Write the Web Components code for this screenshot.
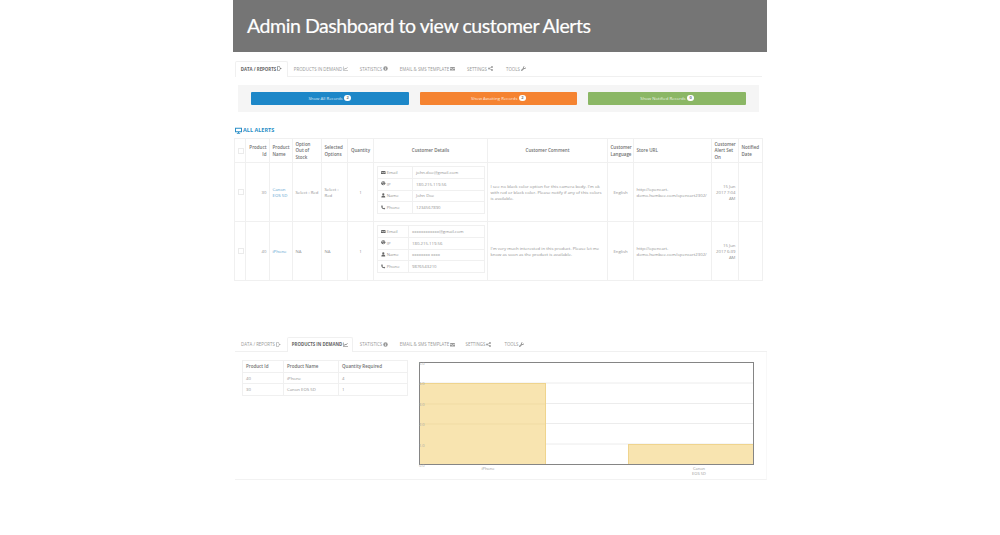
<!DOCTYPE html>
<html>
<head>
<meta charset="utf-8">
<title>Admin Dashboard</title>
<style>
  html, body { margin: 0; background: #fff; }
  body { font-family: "Open Sans", "Liberation Sans", sans-serif; color: #777; }
</style>
</head>
<body>
<dash-page>
  <title-banner>Admin Dashboard to view customer Alerts</title-banner>

  <tab-bar>
    <tab-item active icon="report" style="width:53px">Data / Reports</tab-item>
    <tab-item icon="chart" style="width:66px">Products in Demand</tab-item>
    <tab-item icon="stats" style="width:40px">Statistics</tab-item>
    <tab-item icon="mail" style="width:67px">Email &amp; SMS Template</tab-item>
    <tab-item icon="share" style="width:38px">Settings</tab-item>
    <tab-item icon="wrench" style="width:34px">Tools</tab-item>
  </tab-bar>

  <record-filters>
    <record-button color="#1d87c8" count="2">Show All Records</record-button>
    <record-button color="#f58331" count="2">Show Awaiting Records</record-button>
    <record-button color="#8bb765" count="0">Show Notified Records</record-button>
  </record-filters>

  <alerts-table></alerts-table>

  <demand-panel>
    <tab-bar slot="tabs" class="second">
      <tab-item icon="report" style="width:52px">Data / Reports</tab-item>
      <tab-item active icon="chart" style="width:66px">Products in Demand</tab-item>
      <tab-item icon="stats" style="width:42px">Statistics</tab-item>
      <tab-item icon="mail" style="width:65px">Email &amp; SMS Template</tab-item>
      <tab-item icon="share" style="width:37px">Settings</tab-item>
      <tab-item icon="wrench" style="width:35px">Tools</tab-item>
    </tab-bar>
    <demand-table slot="table"></demand-table>
    <demand-chart slot="chart"></demand-chart>
  </demand-panel>
</dash-page>

<script>
const ICONS = {
  report: '<path d="M0 1h6v1.2H1.2v5.6H6V9H0z"/><path d="M5 2.6l4.6 2.4L5 7.4V6.2L7.4 5 5 3.8z"/>',
  chart: '<path d="M0 1h1v7h9v1H0z"/><path d="M2 7l2-3 2 1 3-3 .6.6L6 6.5 4.3 5.6 2.8 7.6z"/>',
  stats: '<circle cx="5" cy="5" r="4.5"/><path fill="#fff" d="M4.4 2h1.2v1.2H4.4zM4.4 4h1.2v4H4.4z"/>',
  mail: '<path d="M0 2h10v1.2L5 6 0 3.2z"/><path d="M0 4.4l5 2.8 5-2.8V9H0z"/>',
  share: '<circle cx="2" cy="5" r="1.8"/><circle cx="8" cy="2" r="1.8"/><circle cx="8" cy="8" r="1.8"/><path d="M2 4.6l6-3 .4.8-6 3zM2 5.4l6 3 .4-.8-6-3z"/>',
  wrench: '<path d="M9.6 2.4L7.6 4.2 6 3.8 5.7 2.3 7.6.5C6.2 0 4.8.5 4.2 1.6c-.4.8-.4 1.6-.1 2.3L.5 7.5c-.6.6-.6 1.4 0 2s1.4.6 2 0l3.6-3.6c.8.3 1.6.3 2.3-.1 1.1-.6 1.6-2 1.2-3.4z"/>',
  globe: '<circle cx="5" cy="5" r="4.5"/><path fill="#fff" d="M2 3h2.4v1.4L3 5.6zM6 1.6l1.8.8-.8 1.6H5.4zM5 6h2.4L7 8 5.6 8.6z"/>',
  user: '<circle cx="5" cy="2.8" r="2.4"/><path d="M0.8 9.6c0-2.6 1.4-4.2 4.2-4.2s4.2 1.6 4.2 4.2z"/>',
  phone: '<path d="M2.6 .8L4 3.2 3 4.4c.6 1.2 1.4 2 2.6 2.6l1.2-1 2.4 1.4c-.2 1.2-1 2-2 2C3.4 9.4.6 6.6.6 2.8c0-1 .8-1.8 2-2z"/>',
  desktop: '<path d="M0 1h10v6.6H5.8V8.6H7.4V9.6H2.6V8.6H4.2V7.6H0zM1.4 2.4v3.8h7.2V2.4z"/>'
}

/**
 * Small svg glyph, looked up by name in ICONS.
 */
class UiIcon extends HTMLElement {
  connectedCallback() {
    const size = this.getAttribute('size') || 5
    this.attachShadow({mode: 'open'}).innerHTML = `
      <style>
        :host { display: inline-block; line-height: 0; vertical-align: -0.5px; }
        svg { fill: currentColor; }
      </style>
      <svg width="${size}" height="${size}" viewBox="0 0 10 10">${ICONS[this.getAttribute('name')] || ''}</svg>`
  }
}
customElements.define('ui-icon', UiIcon)

class DashPage extends HTMLElement {
  constructor() {
    super()
    this.attachShadow({mode: 'open'}).innerHTML = `
      <style>
        :host { display: block; width: 534px; margin-left: 233px; height: 535px; overflow: hidden; }
      </style>
      <slot></slot>`
  }
}
customElements.define('dash-page', DashPage)

class TitleBanner extends HTMLElement {
  constructor() {
    super()
    this.attachShadow({mode: 'open'}).innerHTML = `
      <style>
        :host {
          display: flex; align-items: center; height: 52px; padding: 0 0 2px 14px; box-sizing: border-box;
          background: #757575; color: #fff; -webkit-text-stroke: 0.2px #fff;
          font: 400 19.5px Lato, "Open Sans", sans-serif; letter-spacing: -0.43px;
        }
      </style>
      <slot></slot>`
  }
}
customElements.define('title-banner', TitleBanner)

class TabBar extends HTMLElement {
  constructor() {
    super()
    this.attachShadow({mode: 'open'}).innerHTML = `
      <style>
        :host {
          display: flex; height: 15px; margin: 9px 5px 0 2px; padding: 0;
          border-bottom: 1px solid #f0f0f0; box-sizing: content-box;
        }
        :host(.second) { margin: 56px 0 0 2px; height: 14px; }
      </style>
      <slot></slot>`
  }
}
customElements.define('tab-bar', TabBar)

class TabItem extends HTMLElement {
  connectedCallback() {
    const icon = this.getAttribute('icon')
    this.attachShadow({mode: 'open'}).innerHTML = `
      <style>
        :host {
          display: flex; align-items: center; justify-content: center; gap: 1px; box-sizing: border-box;
          height: calc(100% + 1px); white-space: nowrap; padding-bottom: 1.5px;
          font: 400 4.4px "Open Sans", sans-serif; text-transform: uppercase; color: #999;
          border: 1px solid transparent; border-bottom: 0;
        }
        :host([active]) {
          font-weight: 700; color: #666; background: #fff;
          border-color: #f0f0f0; border-radius: 2px 2px 0 0;
        }
      </style>
      <slot></slot><ui-icon name="${icon}" size="5"></ui-icon>`
  }
}
customElements.define('tab-item', TabItem)

class RecordFilters extends HTMLElement {
  constructor() {
    super()
    this.attachShadow({mode: 'open'}).innerHTML = `
      <style>
        :host {
          display: flex; gap: 11px; height: 27px; box-sizing: border-box;
          margin: 8px 8px 0 5px; padding: 7px 13px; background: #f5f5f5;
        }
      </style>
      <slot></slot>`
  }
}
customElements.define('record-filters', RecordFilters)

class RecordButton extends HTMLElement {
  connectedCallback() {
    this.attachShadow({mode: 'open'}).innerHTML = `
      <style>
        :host {
          flex: 1; display: flex; align-items: center; justify-content: center; gap: 1.5px; padding-bottom: 1px;
          border-radius: 1px; color: rgba(255,255,255,.85); font: 400 4.3px "Open Sans", sans-serif;
          background: ${this.getAttribute('color')};
        }
        b {
          display: inline-block; width: 7px; height: 6px; line-height: 6px; border-radius: 3px; text-align: center;
          background: #fff; color: #777; font-size: 4px;
        }
      </style>
      <slot></slot><b>${this.getAttribute('count')}</b>`
  }
}
customElements.define('record-button', RecordButton)

class CustomerCard extends HTMLElement {
  connectedCallback() {
    const row = (icon, label, attr) => `
      <tr><th><ui-icon name="${icon}" size="4.6"></ui-icon> ${label}</th><td>${this.getAttribute(attr)}</td></tr>`
    this.attachShadow({mode: 'open'}).innerHTML = `
      <style>
        :host { display: block; }
        table { border-collapse: collapse; width: 100%; table-layout: fixed; }
        th, td {
          border: 1px solid #f0f0f0; height: 11.75px; padding: 0 0 1px 3px; box-sizing: border-box;
          font-weight: 400; font-size: 4.3px; text-align: left; color: #929292; white-space: nowrap;
        }
        th { width: ${this.getAttribute('label-width')}px; }
        ui-icon { color: #666; }
      </style>
      <table>
        ${row('mail', 'Email', 'email')}
        ${row('globe', 'IP', 'ip')}
        ${row('user', 'Name', 'name')}
        ${row('phone', 'Phone', 'phone')}
      </table>`
  }
}
customElements.define('customer-card', CustomerCard)

const ALERT_ROWS = [
  {
    id: 30, product: 'Canon EOS 5D', option: 'Select : Red', selected: 'Select : Red', qty: 1, labelWidth: 35,
    email: 'john.doe@gmail.com', ip: '180.215.119.56', name: 'John Doe', phone: '1234567890',
    comment: "I see no black color option for this camera body. I'm ok with red or black color. Please notify if any of this colors is available.",
    date: '15 Jun 2017 7:04 AM'
  },
  {
    id: 40, product: 'iPhone', option: 'NA', selected: 'NA', qty: 1, labelWidth: 31,
    email: 'xxxxxxxxxxxx@gmail.com', ip: '180.215.119.56', name: 'xxxxxxxx xxxx', phone: '9876543210',
    comment: "I'm very much interested in this product. Please let me know as soon as the product is available.",
    date: '15 Jun 2017 6:39 AM'
  }
]

class AlertsTable extends HTMLElement {
  constructor() {
    super()
    const rows = ALERT_ROWS.map(r => `
      <tr class="row">
        <td class="c"><i class="check"></i></td>
        <td class="r">${r.id}</td>
        <td class="link">${r.product}</td>
        <td>${r.option}</td>
        <td>${r.selected}</td>
        <td class="c">${r.qty}</td>
        <td class="card"><customer-card label-width="${r.labelWidth}" email="${r.email}" ip="${r.ip}" name="${r.name}" phone="${r.phone}"></customer-card></td>
        <td>${r.comment}</td>
        <td class="c">English</td>
        <td>http://opencart-demo.humbee.com/opencart2302/</td>
        <td class="r">${r.date}</td>
        <td></td>
      </tr>`).join('')
    this.attachShadow({mode: 'open'}).innerHTML = `
      <style>
        :host { display: block; margin: 15px 5px 0 1px; font: 400 4.3px/6.1px "Open Sans", sans-serif; color: #929292; }
        h2 {
          margin: 0 0 4px 1px; height: 7px; font: 700 5.5px/7px "Open Sans", sans-serif; color: #2a8fc7;
          text-transform: uppercase; display: flex; align-items: center; gap: 1px;
        }
        table { border-collapse: collapse; table-layout: fixed; width: 528px; }
        th, td { border: 1px solid #f0f0f0; padding: 0 2.5px; box-sizing: border-box; }
        th { height: 24px; font-weight: 600; font-size: 4.5px; color: #707070; text-align: left; }
        tr.row td { height: 59px; }
        tr.row td.card { padding: 3px 2px 0 3px; vertical-align: top; }
        .c { text-align: center; }
        .r { text-align: right; }
        tr.row td.link { color: #5ba3d0; }
        .check { display: inline-block; width: 4px; height: 4px; border: 1px solid #ebebeb; vertical-align: middle; }
      </style>
      <h2><ui-icon name="desktop" size="7"></ui-icon>All Alerts</h2>
      <table>
        <colgroup>
          <col style="width:11px"><col style="width:24px"><col style="width:23px"><col style="width:29px">
          <col style="width:26px"><col style="width:26px"><col style="width:114px"><col style="width:120px">
          <col style="width:26px"><col style="width:78px"><col style="width:27px"><col style="width:24px">
        </colgroup>
        <tr>
          <th class="c"><i class="check"></i></th>
          <th class="r">Product Id</th>
          <th>Product Name</th>
          <th>Option Out of Stock</th>
          <th>Selected Options</th>
          <th class="c">Quantity</th>
          <th class="c">Customer Details</th>
          <th class="c">Customer Comment</th>
          <th class="c">Customer Language</th>
          <th>Store URL</th>
          <th>Customer Alert Set On</th>
          <th>Notified Date</th>
        </tr>
        ${rows}
      </table>`
  }
}
customElements.define('alerts-table', AlertsTable)

class DemandPanel extends HTMLElement {
  constructor() {
    super()
    this.attachShadow({mode: 'open'}).innerHTML = `
      <style>
        :host { display: block; }
        .body {
          display: flex; height: 128px; box-sizing: border-box; margin-left: 2px;
          padding: 8px 0 0 7px; border-right: 1px solid #f8f8f8; border-bottom: 1px solid #f2f2f2;
        }
      </style>
      <slot name="tabs"></slot>
      <div class="body">
        <slot name="table"></slot>
        <slot name="chart"></slot>
      </div>`
  }
}
customElements.define('demand-panel', DemandPanel)

class DemandTable extends HTMLElement {
  constructor() {
    super()
    this.attachShadow({mode: 'open'}).innerHTML = `
      <style>
        :host { display: block; width: 165px; font: 400 4.3px "Open Sans", sans-serif; color: #929292; }
        table { border-collapse: collapse; table-layout: fixed; width: 165px; }
        th, td { border: 1px solid #f0f0f0; height: 11.6px; padding: 0 3px; text-align: left; box-sizing: border-box; }
        th { font-weight: 600; font-size: 4.5px; color: #707070; }
      </style>
      <table>
        <colgroup><col style="width:41px"><col style="width:55px"><col style="width:69px"></colgroup>
        <tr><th>Product Id</th><th>Product Name</th><th>Quantity Required</th></tr>
        <tr><td>40</td><td>iPhone</td><td>4</td></tr>
        <tr><td>30</td><td>Canon EOS 5D</td><td>1</td></tr>
      </table>`
  }
}
customElements.define('demand-table', DemandTable)

class DemandChart extends HTMLElement {
  constructor() {
    super()
    // plot coordinates are relative to this element, the canvas itself is the content here
    const grid = [21, 41.5, 61.5, 82].map(y => `<line x1="12" x2="346" y1="${y + 2}" y2="${y + 2}" stroke="#ececec"/>`).join('')
    const ticks = ['5.0', '4.0', '3.0', '2.0', '1.0', '0.0'].map((t, i) =>
      `<text x="12" y="${5 + i * 20.4}" font-size="4" fill="#aaa">${t}</text>`).join('')
    this.attachShadow({mode: 'open'}).innerHTML = `
      <style>
        :host { display: block; width: 352px; height: 118px; }
        svg { display: block; font-family: "Open Sans", sans-serif; }
      </style>
      <svg width="352" height="118" viewBox="0 0 352 118">
        ${grid}
        <rect x="12.5" y="23.5" width="126" height="81" fill="#f8e4b0" stroke="#efd48e"/>
        <rect x="221.5" y="84.5" width="125" height="20" fill="#f8e4b0" stroke="#efd48e"/>
        <path d="M12 44h126M12 64h126" stroke="#f0dba4"/>
        <rect x="12.5" y="2.5" width="334" height="102" fill="none" stroke="#858585"/>
        ${ticks}
        <text x="81" y="110" font-size="4" fill="#999" text-anchor="middle">iPhone</text>
        <text x="292" y="110" font-size="4" fill="#999" text-anchor="middle">Canon</text>
        <text x="292" y="115" font-size="4" fill="#999" text-anchor="middle">EOS 5D</text>
      </svg>`
  }
}
customElements.define('demand-chart', DemandChart)
</script>
</body>
</html>
